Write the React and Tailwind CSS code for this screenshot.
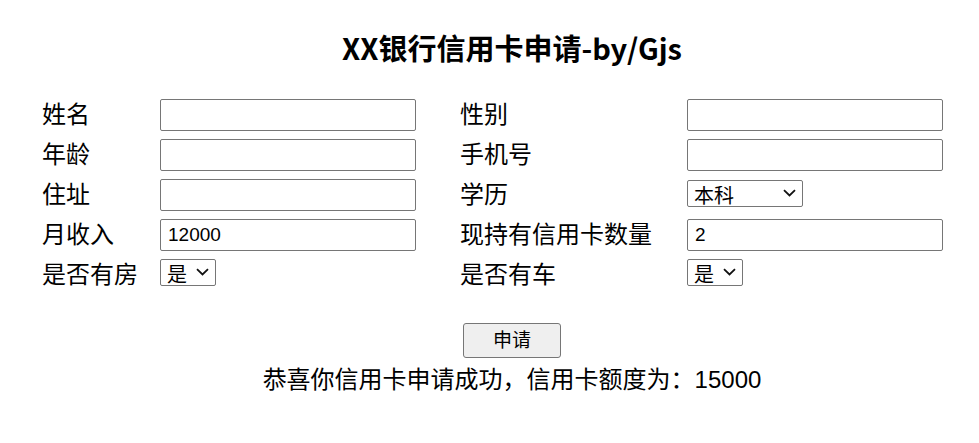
import React, { useState } from 'react';

const font = "font-['Liberation_Sans','Noto_Sans_CJK_SC',sans-serif]";

const Select = ({ width, options, value }) => (
  <div className={`relative h-[27px] ${width}`}>
    <select
      defaultValue={value}
      className="block h-[27px] w-full appearance-none overflow-hidden border border-[#767676] rounded-[2px] bg-white pl-[6px] pt-[4px] text-[20px] leading-[20px] text-black outline-none"
    >
      {options.map((o) => (
        <option key={o}>{o}</option>
      ))}
    </select>
    <svg
      className="pointer-events-none absolute right-[7px] top-[9px]"
      width="13"
      height="8"
      viewBox="0 0 13 8"
      fill="none"
    >
      <path d="M1 1.2 L6.5 6.5 L12 1.2" stroke="#111" strokeWidth="1.8" />
    </svg>
  </div>
);

const App = () => {
  const [income, setIncome] = useState('12000');
  const [cards, setCards] = useState('2');

  const inputCls = 'h-8 w-[256px] border border-[#767676] rounded-[2px] bg-white px-[7px] text-[19px] text-black outline-none';

  return (
    <div className={`${font} w-full min-h-screen bg-white text-black`}>
      <div className="ml-[42px] w-[940px] pt-[29px]">
        <h1 className="text-center text-[29px] leading-[36px] font-bold font-['Noto_Sans_CJK_SC',sans-serif]">
          XX银行信用卡申请-by/Gjs
        </h1>

        {/* 表单区 */}
        <div className="mt-[34px] grid grid-cols-[118px_300px_227px_256px] auto-rows-[32px] gap-y-2 items-center text-[24px]">
          <span>姓名</span>
          <input className={inputCls} />
          <span>性别</span>
          <input className={inputCls} />

          <span>年龄</span>
          <input className={inputCls} />
          <span>手机号</span>
          <input className={inputCls} />

          <span>住址</span>
          <input className={inputCls} />
          <span>学历</span>
          <div className="flex self-start pt-[1px]">
            <Select width="w-[116px]" options={['本科', '硕士', '博士']} value="本科" />
          </div>

          <span>月收入</span>
          <input className={inputCls} value={income} onChange={(e) => setIncome(e.target.value)} />
          <span>现持有信用卡数量</span>
          <input className={inputCls} value={cards} onChange={(e) => setCards(e.target.value)} />

          <span className="self-start leading-[32px]">是否有房</span>
          <div className="flex self-start">
            <Select width="w-14" options={['是', '否']} value="是" />
          </div>
          <span className="self-start leading-[32px]">是否有车</span>
          <div className="flex self-start">
            <Select width="w-14" options={['是', '否']} value="是" />
          </div>
        </div>

        <div className="mt-8 flex justify-center">
          <button className="h-[35px] w-[98px] rounded-[3px] border border-[#767676] bg-[#efefef] text-[19px] leading-none">
            申请
          </button>
        </div>
        <p className="mt-[6px] text-center text-[24px] leading-[32px]">
          恭喜你信用卡申请成功，信用卡额度为：15000
        </p>
      </div>
    </div>
  );
};

export default App;
